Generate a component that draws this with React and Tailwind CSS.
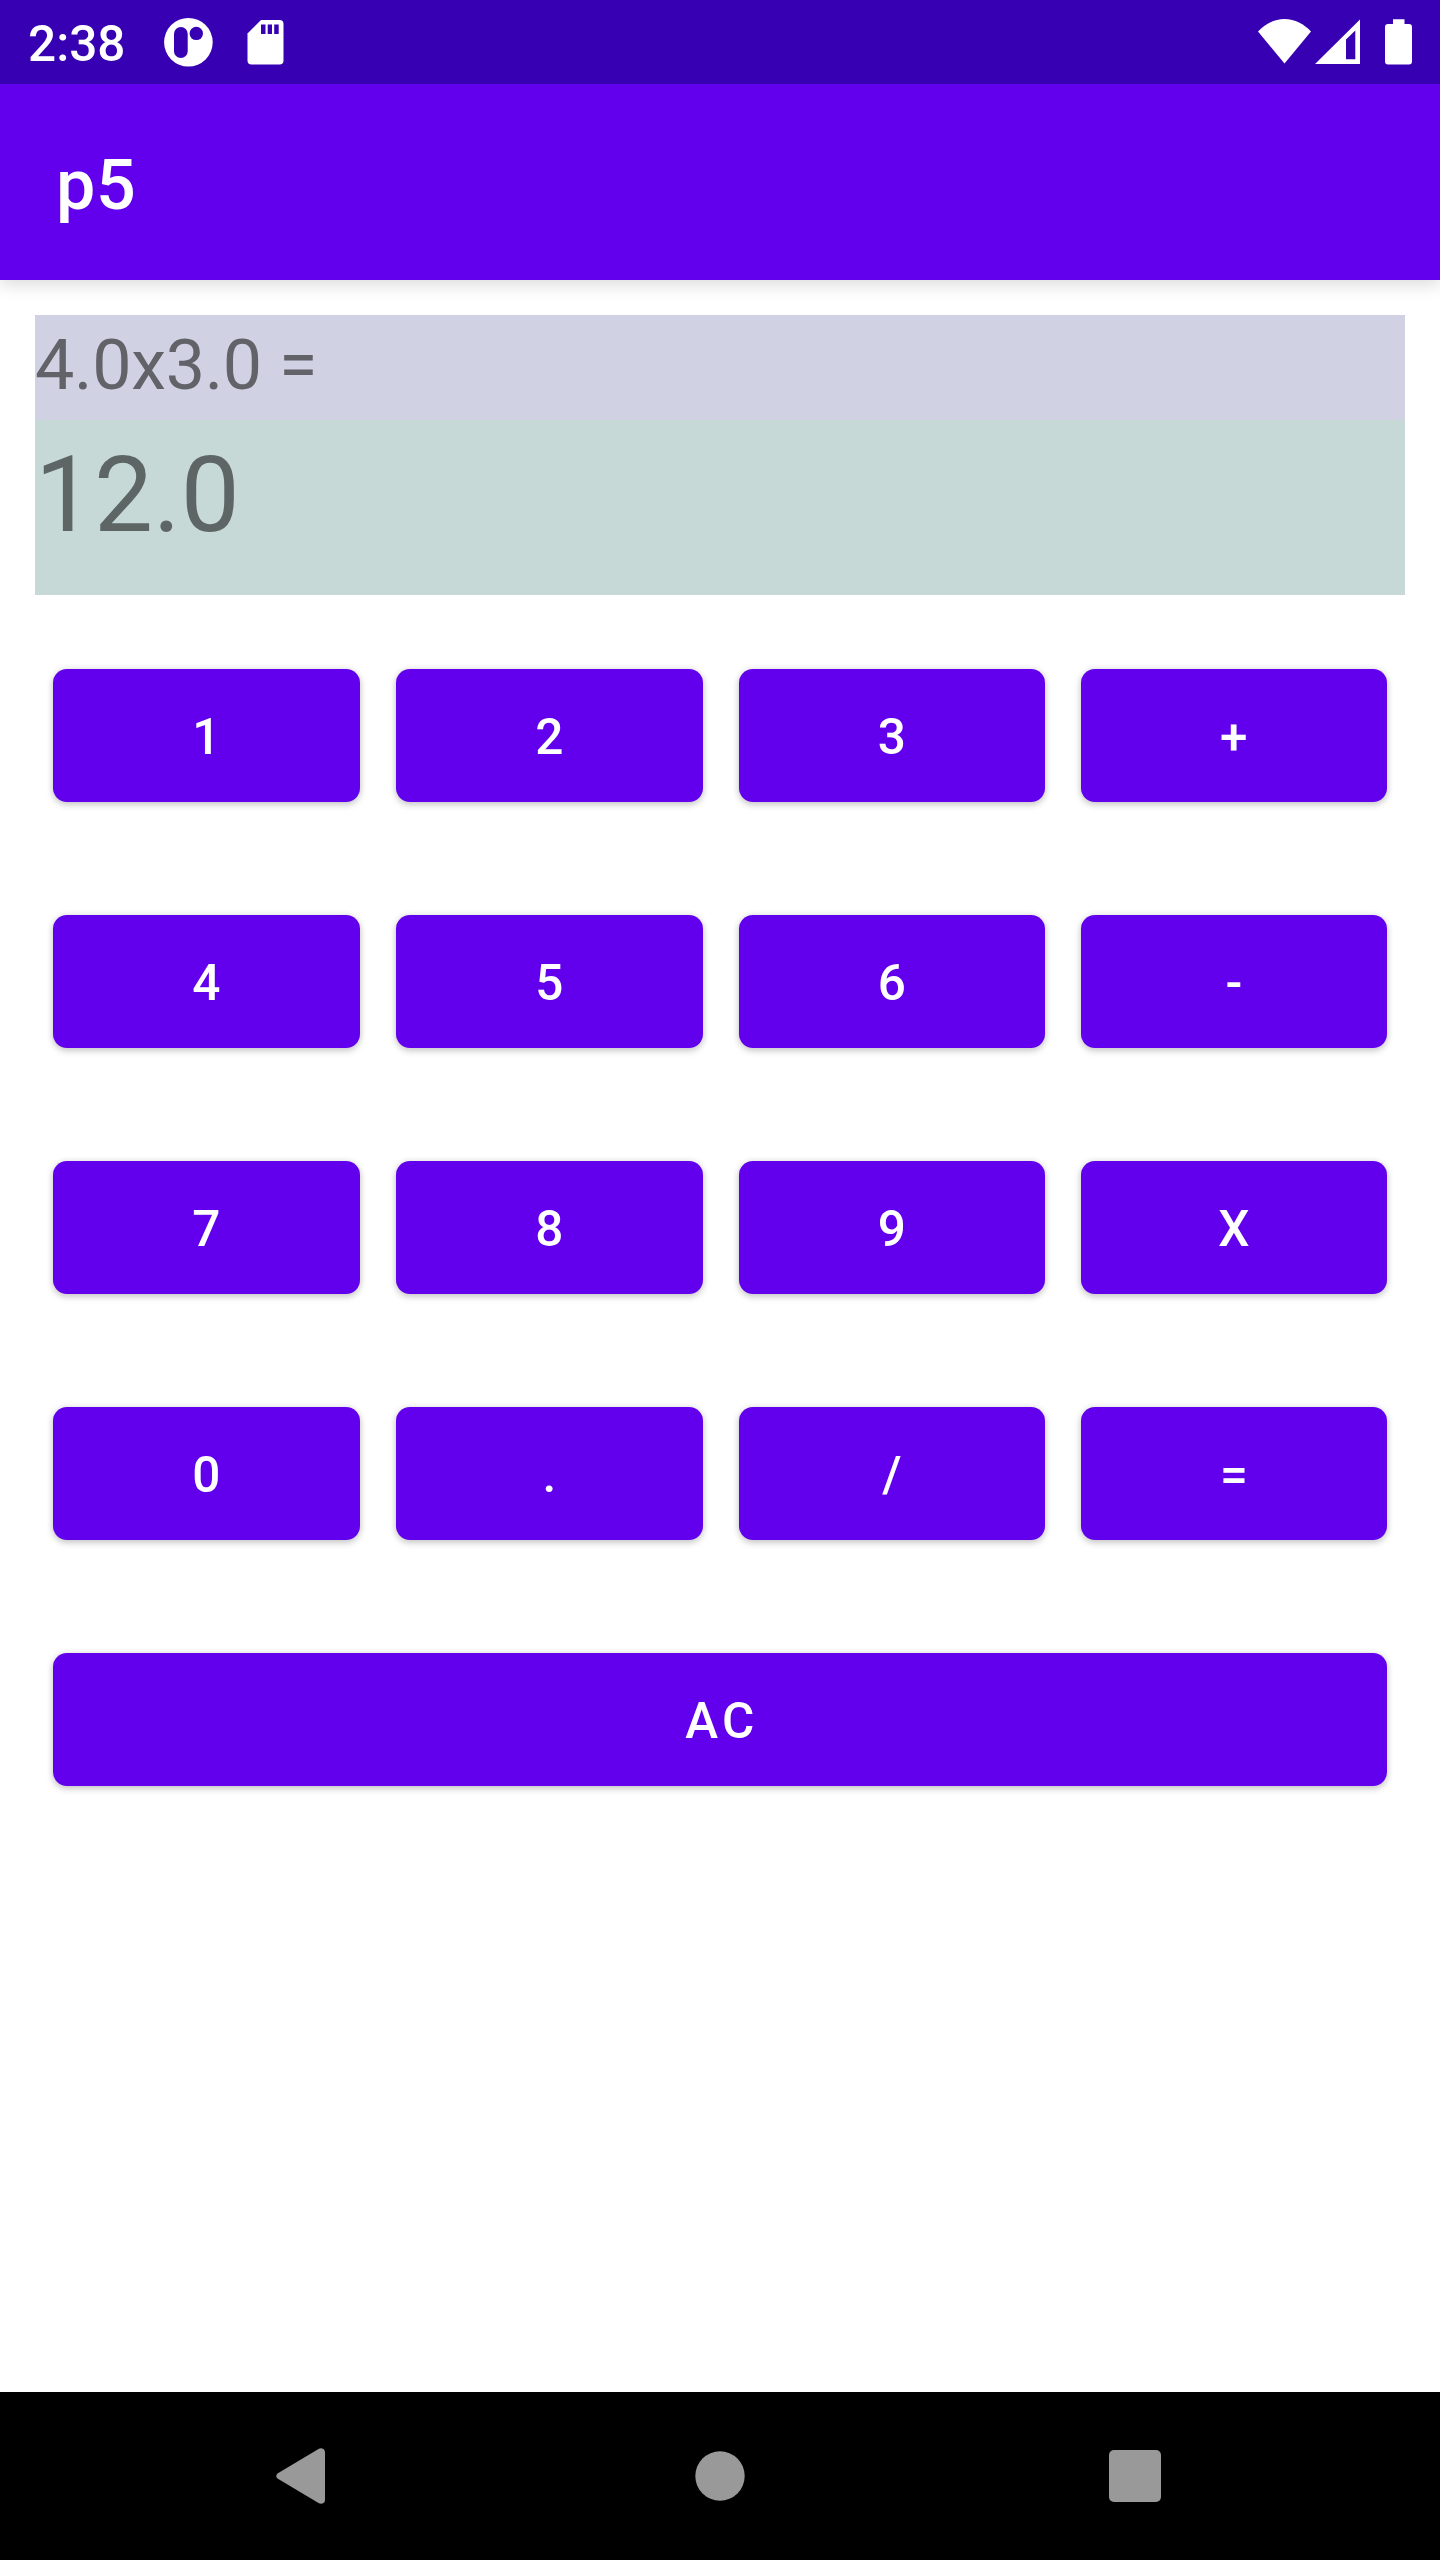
const keys = ['1', '2', '3', '+', '4', '5', '6', '-', '7', '8', '9', 'X', '0', '.', '/', '='];

function Key({ label, className = '' }) {
  return (
    <button
      type="button"
      className={`flex h-[133px] items-center justify-center rounded-[14px] bg-[#6200ee] pt-[5px] pl-[4px] text-[49.500px] leading-none font-medium tracking-[4.37px] text-white shadow-[0_3px_7px_rgba(0,0,0,0.18),0_0_7px_rgba(0,0,0,0.10)] ${className}`}
    >
      {label}
    </button>
  );
}

function StatusBar() {
  return (
    <div className="relative z-10 flex h-[84px] items-center justify-between bg-[#3700b3] px-7 text-white">
      <div className="flex items-center">
        <span className="w-[136px] pt-[6px] text-[49.500px] leading-none font-medium">2:38</span>
        <svg className="h-[84px] w-[49px]" viewBox="164 0 49 84" fill="currentColor">
          <circle cx="188.4" cy="42.3" r="24.3" />
          <rect x="174" y="27" width="13.7" height="31" rx="6.8" fill="#3700b3" />
          <circle cx="196.3" cy="33.4" r="6.7" fill="#3700b3" />
        </svg>
        <svg className="ml-[34px] h-[84px] w-[37px]" viewBox="247 0 37 84" fill="currentColor">
          <path d="M261 20h18.500a4 4 0 0 1 4 4v36.500a4 4 0 0 1-4 4h-28a4 4 0 0 1-4-4v-27z" />
          <path d="M261 24.500h4.500v9.500h-4.500zM267.700 24.500h4.300v9.500h-4.300zM274.200 24.500h4.500v9.500h-4.500z" fill="#3700b3" />
        </svg>
      </div>
      <div className="flex items-center">
        <svg className="h-[84px] w-[54px]" viewBox="1258 0 54 84" fill="currentColor">
          <path d="M1284.500 63.500L1258 31.500C1265 24 1274 19 1284.500 19S1304 24 1311 31.500z" />
        </svg>
        <svg className="ml-[3px] h-[84px] w-[45px]" viewBox="1315 0 45 84" fill="currentColor">
          <path fillRule="evenodd" d="M1315 64L1360 19.500V64zM1346 39.500V59.300H1355.300V30.500z" />
        </svg>
        <svg className="ml-[25px] h-[84px] w-[27px]" viewBox="1385 0 27 84" fill="currentColor">
          <path d="M1393 19.300h11.500v4.700h4.500a3 3 0 0 1 3 3v34.500a3 3 0 0 1-3 3h-21a3 3 0 0 1-3-3v-34.500a3 3 0 0 1 3-3h5z" />
        </svg>
      </div>
    </div>
  );
}

function NavigationBar() {
  return (
    <nav className="flex h-[168px] items-center bg-black pl-[276px] text-[#999999]">
      <svg className="h-[56px] w-[49px]" viewBox="0 0 49 56" fill="currentColor">
        <path d="M1.900 25.200L42.500.900Q45 -.500 47.500 1Q49 2 49 4.500V51.500Q49 54 47.500 55Q45 56.500 42.500 55.100L1.900 30.800Q-1.500 28 1.900 25.200z" />
      </svg>
      <svg className="ml-[370px] size-[50px]" viewBox="0 0 50 50" fill="currentColor">
        <circle cx="25" cy="25" r="24.700" />
      </svg>
      <div className="ml-[364px] size-[52px] rounded-[5px] bg-[#999999]" />
    </nav>
  );
}

export default function App() {
  return (
    <div className="flex h-[2560px] w-[1440px] flex-col bg-white font-['Roboto',sans-serif]">
      <StatusBar />
      <header className="flex h-[196px] items-center bg-[#6200ee] px-14 pt-[6px] text-[70px] leading-none font-medium tracking-[0.7px] text-white shadow-[0_5px_16px_rgba(0,0,0,0.14)]">
        <h1>p5</h1>
      </header>
      <main className="flex-1 p-[35px]">
        <div className="h-[105px] bg-[#d1d1e4] text-[70px] leading-[100px] tracking-[-0.3px] text-[#626269]">4.0x3.0 =</div>
        <div className="h-[175px] bg-[#c6d9d7] text-[105px] leading-[152px] text-[#5d6665]">12.0</div>
        <div className="mt-[74px] grid grid-cols-[307px_307px_306px_306px] gap-x-9 gap-y-[113px] px-[18px]">
          {keys.map((key) => (
            <Key key={key} label={key} />
          ))}
          <Key label="AC" className="col-span-4" />
        </div>
      </main>
      <NavigationBar />
    </div>
  );
}
